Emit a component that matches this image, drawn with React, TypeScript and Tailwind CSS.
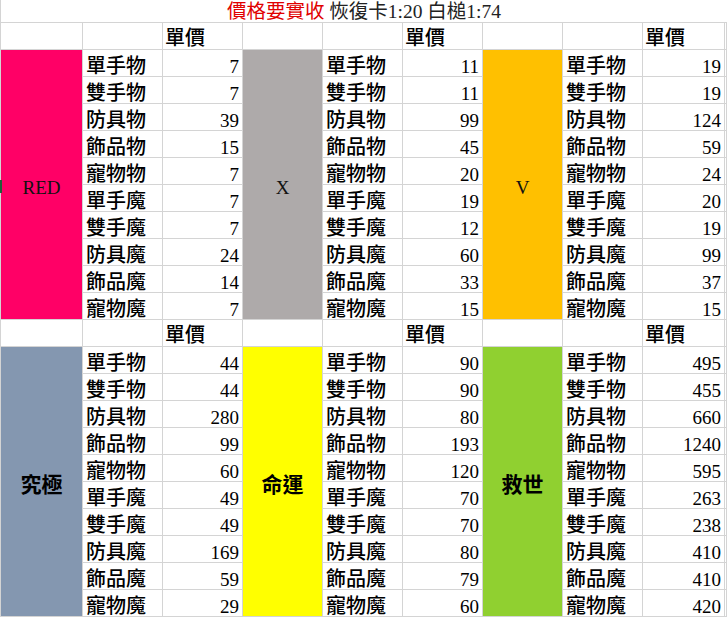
import React from "react";

const LABELS = ["單手物", "雙手物", "防具物", "飾品物", "寵物物", "單手魔", "雙手魔", "防具魔", "飾品魔", "寵物魔"];

type Group = { name: string; bg: string; cjk: boolean; values: number[] };

const BLOCKS: Group[][] = [
  [
    { name: "RED", bg: "bg-[#ff0066]", cjk: false, values: [7, 7, 39, 15, 7, 7, 7, 24, 14, 7] },
    { name: "X", bg: "bg-[#aeaaaa]", cjk: false, values: [11, 11, 99, 45, 20, 19, 12, 60, 33, 15] },
    { name: "V", bg: "bg-[#ffc000]", cjk: false, values: [19, 19, 124, 59, 24, 20, 19, 99, 37, 15] },
  ],
  [
    { name: "究極", bg: "bg-[#8497b0]", cjk: true, values: [44, 44, 280, 99, 60, 49, 49, 169, 59, 29] },
    { name: "命運", bg: "bg-[#ffff00]", cjk: true, values: [90, 90, 80, 193, 120, 70, 70, 80, 79, 60] },
    { name: "救世", bg: "bg-[#90d030]", cjk: true, values: [495, 455, 660, 1240, 595, 263, 238, 410, 410, 420] },
  ],
];

const cell = "border-r border-b border-[#d4d4d4] whitespace-nowrap";
const labelCls = `${cell} pl-[3px] pt-[5px] text-[20px] leading-[20px] font-medium text-black font-['Noto_Sans_CJK_TC',sans-serif]`;
const headCls = `${cell} pl-[2px] pt-[4px] text-[20px] leading-[20px] font-medium text-black font-['Noto_Sans_CJK_TC',sans-serif]`;
const numCls = `${cell} pr-[3px] pt-[8px] text-right text-[19px] leading-[18px] text-black font-['Liberation_Serif',serif]`;

function Block({ groups }: { groups: Group[] }) {
  const cells: React.ReactNode[] = [];
  groups.forEach((g, gi) => {
    cells.push(<div key={`h-c-${gi}`} className={`${cell} ${gi === 0 ? "border-l" : ""}`} />);
    cells.push(<div key={`h-l-${gi}`} className={cell} />);
    cells.push(
      <div key={`h-v-${gi}`} className={headCls}>
        單價
      </div>
    );
  });
  cells.push(<div key="h-x" className={cell} />);

  LABELS.forEach((label, ri) => {
    groups.forEach((g, gi) => {
      if (ri === 0) {
        cells.push(
          <div
            key={`c-${gi}`}
            className={`row-span-10 ${g.bg} border-r border-b border-[#d4d4d4] ${gi === 0 ? "border-l" : ""} flex items-center justify-center ${
              g.cjk
                ? "pt-[3px] text-[21px] leading-[21px] font-bold text-black font-['Noto_Sans_CJK_TC',sans-serif]"
                : "pt-[6px] text-[19px] leading-[19px] text-[#111] font-['Liberation_Serif',serif]"
            }`}
          >
            {g.name}
          </div>
        );
      }
      cells.push(
        <div key={`l-${ri}-${gi}`} className={labelCls}>
          {label}
        </div>
      );
      cells.push(
        <div key={`v-${ri}-${gi}`} className={numCls}>
          {g.values[ri]}
        </div>
      );
    });
    cells.push(<div key={`x-${ri}`} className={cell} />);
  });
  return <>{cells}</>;
}

export default function App() {
  return (
    <div className="relative w-[727px] h-[617px] overflow-hidden bg-white">
      <div className="grid grid-cols-[83px_80px_80px_80px_80px_80px_80px_80px_82px_1fr] grid-rows-[23px_repeat(22,27px)]">
        <div className="col-span-10 border-l border-b border-[#d4d4d4] pt-[2px] text-center text-[19.5px] leading-[20px] whitespace-nowrap font-['Liberation_Serif','Noto_Sans_CJK_TC',sans-serif]">
          <span className="text-[#e00000]">價格要實收</span>
          <span className="text-[#222]"> 恢復卡1:20 白槌1:74</span>
        </div>
        <Block groups={BLOCKS[0]} />
        <Block groups={BLOCKS[1]} />
      </div>
      <div className="absolute left-0 top-[180px] w-[2px] h-[13px] bg-[#1f5f3a]" />
    </div>
  );
}
